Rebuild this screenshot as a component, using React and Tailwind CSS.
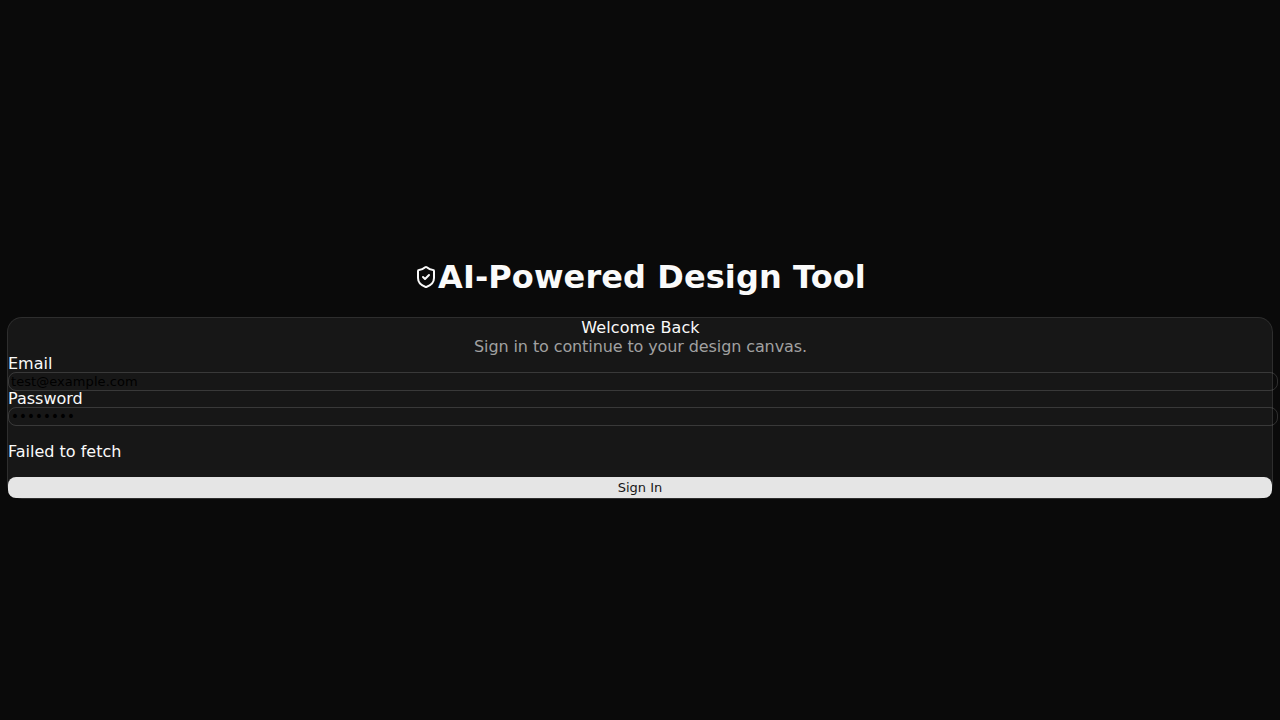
import { ShieldCheck } from "lucide-react";

const inputClass =
  "block h-[19px] w-[calc(100%+6px)] rounded-lg border border-white/15 bg-transparent px-0.5 py-px leading-[15px] text-black outline-none";

function Field({ id, label, type, value, className = "" }) {
  return (
    <div>
      <label htmlFor={id} className="block leading-4">
        {label}
      </label>
      <input id={id} type={type} defaultValue={value} className={`${inputClass} ${className}`} />
    </div>
  );
}

export default function App() {
  return (
    <main className="h-screen overflow-hidden bg-[#0a0a0a] px-2 pt-[259px] font-['DejaVu_Sans',sans-serif] text-base text-neutral-50">
      <header className="mb-[22px] flex items-center justify-center">
        <ShieldCheck size={24} className="mb-px" />
        <h1 className="text-[32px] leading-[37px] font-bold tracking-[0.09px]">AI-Powered Design Tool</h1>
      </header>
      <section className="rounded-[14px] bg-neutral-900 ring-1 ring-white/15">
        <div className="text-center leading-[19px]">
          <div className="pl-px tracking-[0.1px]">Welcome Back</div>
          <div className="pl-px tracking-[-0.105px] text-[#a1a1a1]">Sign in to continue to your design canvas.</div>
        </div>
        <form onSubmit={(event) => event.preventDefault()}>
          <Field id="email" label="Email" type="email" value="test@example.com" className="text-[13px] tracking-[0.06px]" />
          <Field id="password" label="Password" type="password" value="password" className="text-[13.3333px] tracking-[0.14px]" />
          <p className="my-4 leading-[19px]">Failed to fetch</p>
          <button
            type="submit"
            className="block h-[21px] w-full rounded-lg bg-neutral-200 text-[13px] leading-[15px] text-neutral-900"
          >
            Sign In
          </button>
        </form>
      </section>
    </main>
  );
}
